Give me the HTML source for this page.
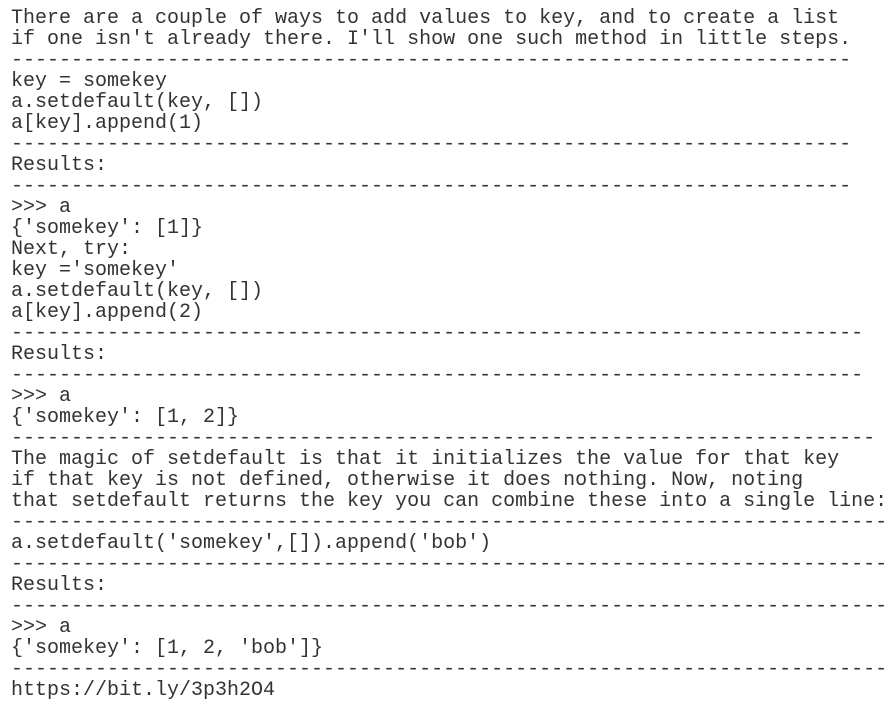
<!DOCTYPE html>
<html><head><meta charset="utf-8"><style>
html,body{margin:0;padding:0;background:#fff;width:896px;height:713px;overflow:hidden}
pre{margin:0;padding:8px 0 0 11px;font-family:"Liberation Mono",monospace;font-size:20px;line-height:21px;color:#333}
</style></head><body><pre>There are a couple of ways to add values to key, and to create a list
if one isn't already there. I'll show one such method in little steps.
----------------------------------------------------------------------
key = somekey
a.setdefault(key, [])
a[key].append(1)
----------------------------------------------------------------------
Results:
----------------------------------------------------------------------
&gt;&gt;&gt; a
{'somekey': [1]}
Next, try:
key ='somekey'
a.setdefault(key, [])
a[key].append(2)
-----------------------------------------------------------------------
Results:
-----------------------------------------------------------------------
&gt;&gt;&gt; a
{'somekey': [1, 2]}
------------------------------------------------------------------------
The magic of setdefault is that it initializes the value for that key
if that key is not defined, otherwise it does nothing. Now, noting
that setdefault returns the key you can combine these into a single line:
-------------------------------------------------------------------------
a.setdefault('somekey',[]).append('bob')
-------------------------------------------------------------------------
Results:
-------------------------------------------------------------------------
&gt;&gt;&gt; a
{'somekey': [1, 2, 'bob']}
-------------------------------------------------------------------------
https://bit.ly/3p3h2O4</pre></body></html>
